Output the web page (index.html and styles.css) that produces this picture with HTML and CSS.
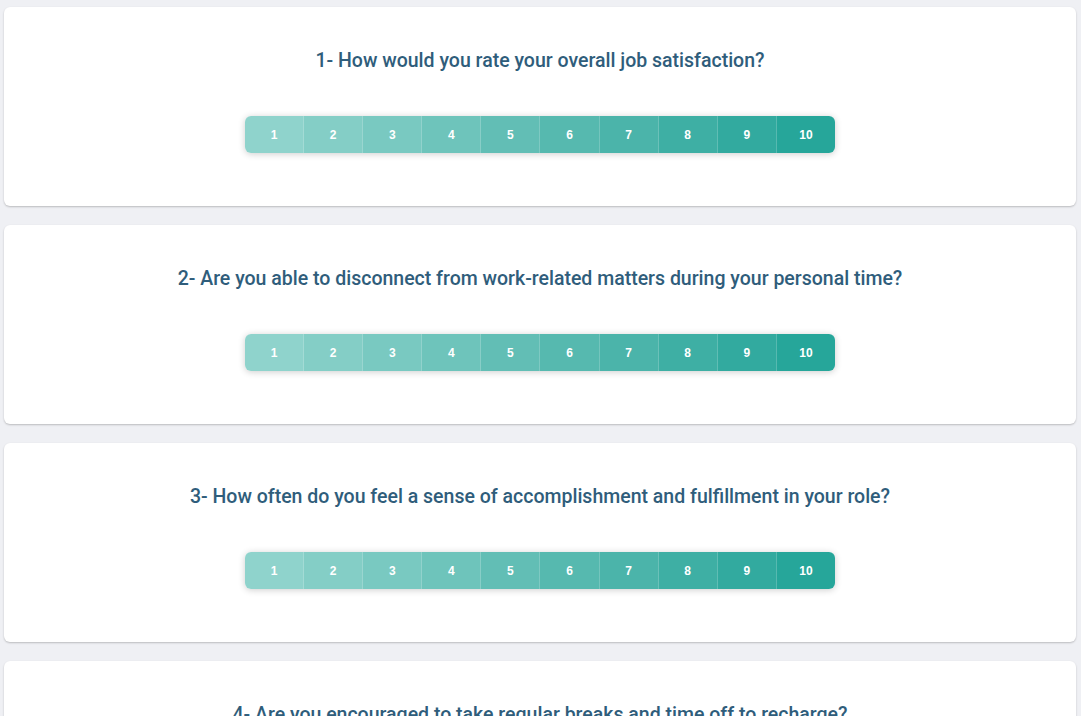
FILE: index.html
```html
<!DOCTYPE html>
<html lang="en">
<head>
<meta charset="utf-8">
<title>Survey</title>
<link rel="stylesheet" href="styles.css">
</head>
<body>
<main class="survey">
  <section class="card">
    <h2 class="question">1- How would you rate your overall job satisfaction?</h2>
    <div class="scale">
      <button class="seg s1">1</button><button class="seg s2">2</button><button class="seg s3">3</button><button class="seg s4">4</button><button class="seg s5">5</button><button class="seg s6">6</button><button class="seg s7">7</button><button class="seg s8">8</button><button class="seg s9">9</button><button class="seg s10">10</button>
    </div>
  </section>
  <section class="card">
    <h2 class="question">2- Are you able to disconnect from work-related matters during your personal time?</h2>
    <div class="scale">
      <button class="seg s1">1</button><button class="seg s2">2</button><button class="seg s3">3</button><button class="seg s4">4</button><button class="seg s5">5</button><button class="seg s6">6</button><button class="seg s7">7</button><button class="seg s8">8</button><button class="seg s9">9</button><button class="seg s10">10</button>
    </div>
  </section>
  <section class="card">
    <h2 class="question">3- How often do you feel a sense of accomplishment and fulfillment in your role?</h2>
    <div class="scale">
      <button class="seg s1">1</button><button class="seg s2">2</button><button class="seg s3">3</button><button class="seg s4">4</button><button class="seg s5">5</button><button class="seg s6">6</button><button class="seg s7">7</button><button class="seg s8">8</button><button class="seg s9">9</button><button class="seg s10">10</button>
    </div>
  </section>
  <section class="card">
    <h2 class="question">4- Are you encouraged to take regular breaks and time off to recharge?</h2>
    <div class="scale">
      <button class="seg s1">1</button><button class="seg s2">2</button><button class="seg s3">3</button><button class="seg s4">4</button><button class="seg s5">5</button><button class="seg s6">6</button><button class="seg s7">7</button><button class="seg s8">8</button><button class="seg s9">9</button><button class="seg s10">10</button>
    </div>
  </section>
</main>
</body>
</html>
```
FILE: styles.css
```css
html, body {
  margin: 0;
  padding: 0;
  background: #eff0f4;
  overflow: hidden;
}
.survey {
  display: flex;
  flex-direction: column;
  gap: 19px;
  padding: 7px 5px 0 4px;
}
.card {
  background: #ffffff;
  border-radius: 6px;
  box-shadow: 0 1px 2px rgba(0, 0, 0, 0.22);
  height: 199px;
  box-sizing: border-box;
  padding-top: 41px;
  display: flex;
  flex-direction: column;
  align-items: center;
}
.question {
  margin: 0;
  font-family: Roboto, "Liberation Sans", sans-serif;
  font-weight: 500;
  font-size: 19.5px;
  line-height: 26px;
  color: #2f5d7b;
  text-align: center;
}
.scale {
  margin-top: 42px;
  display: flex;
  width: 590px;
  height: 37px;
  border-radius: 6px;
  overflow: hidden;
  box-shadow: 0 1px 7px rgba(0, 0, 0, 0.2);
}
.seg {
  flex: 1;
  border: 0;
  border-right: 1px solid rgba(255, 255, 255, 0.18);
  margin: 0;
  padding: 0;
  color: #ffffff;
  font-family: "Liberation Sans", Arial, sans-serif;
  font-weight: 700;
  font-size: 12px;
  cursor: pointer;
}
.seg:last-child { border-right: 0; }
.s1 { background: #8fd3cc; }
.s2 { background: #84cec6; }
.s3 { background: #79c9c1; }
.s4 { background: #6ec4bb; }
.s5 { background: #62beb5; }
.s6 { background: #56b9af; }
.s7 { background: #4bb4aa; }
.s8 { background: #3eafa4; }
.s9 { background: #32aa9f; }
.s10 { background: #26a69a; }
```
